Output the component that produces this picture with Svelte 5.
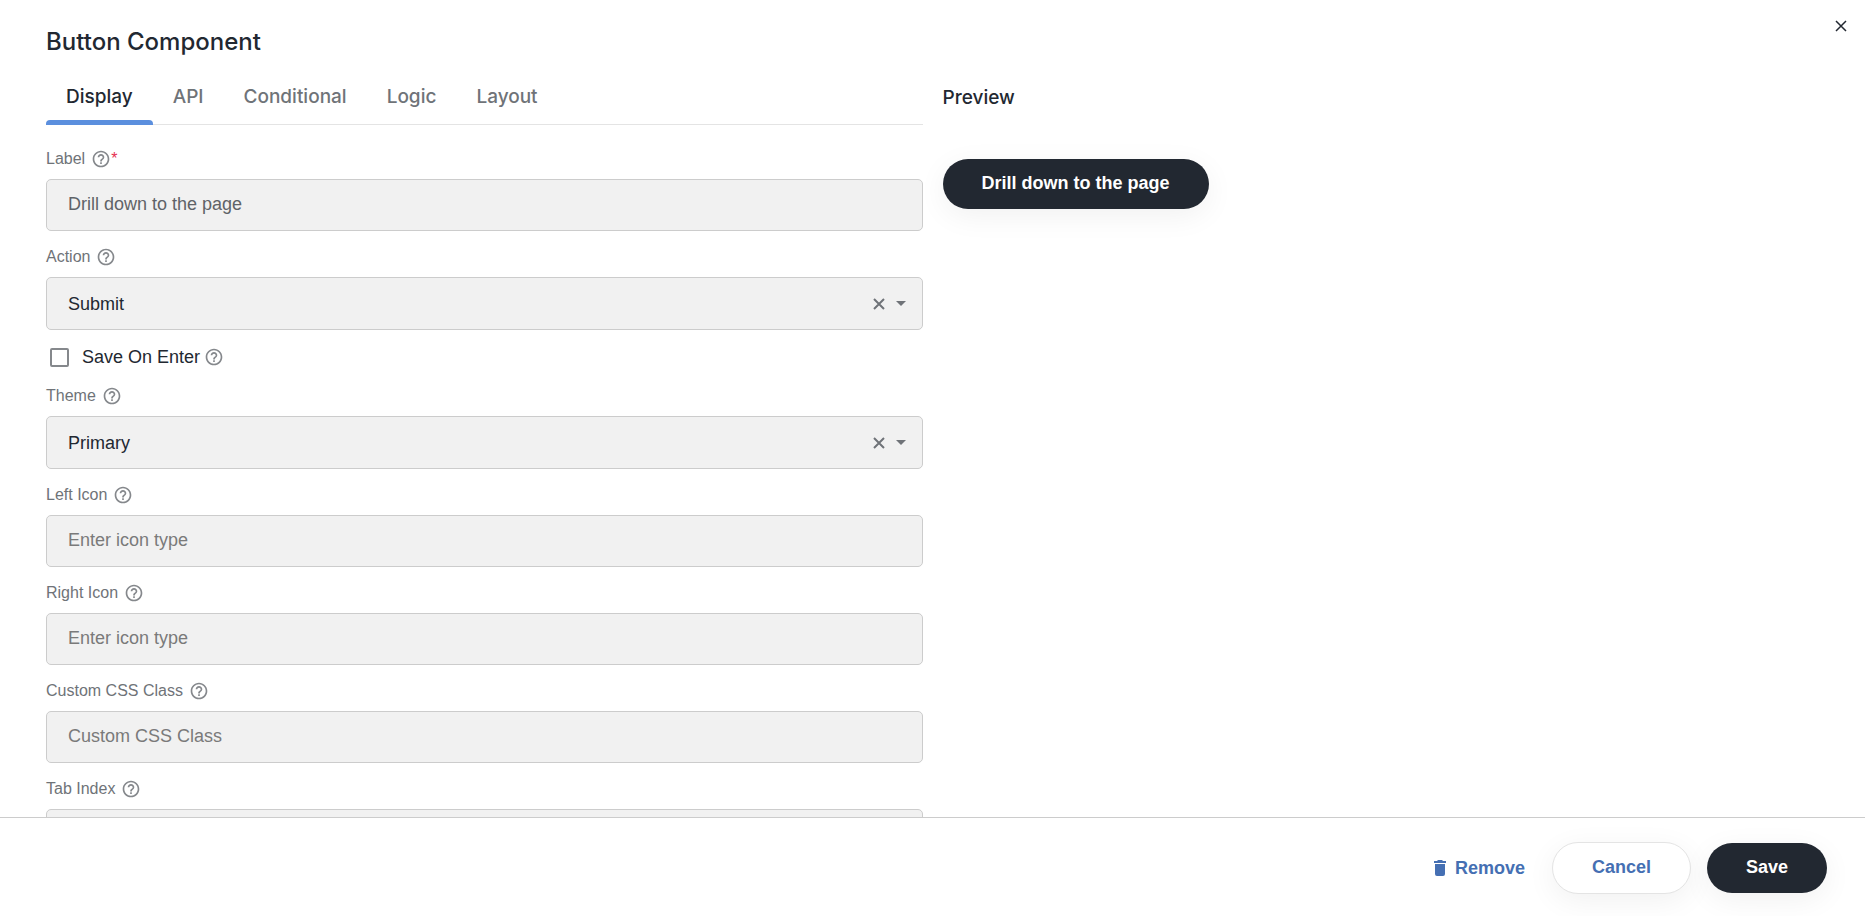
<script>
    const tabs = ["Display", "API", "Conditional", "Logic", "Layout"];
    let activeTab = "Display";

    let fields = [
        { id: "label", label: "Label", type: "text", value: "Drill down to the page", placeholder: "Field Label", required: true },
        { id: "action", label: "Action", type: "select", value: "Submit", options: ["Submit", "Save in state", "Event", "Custom", "Reset"] },
        { id: "saveOnEnter", label: "Save On Enter", type: "checkbox", value: false },
        { id: "theme", label: "Theme", type: "select", value: "Primary", options: ["Primary", "Secondary", "Info", "Success", "Danger", "Warning"] },
        { id: "leftIcon", label: "Left Icon", type: "text", value: "", placeholder: "Enter icon type" },
        { id: "rightIcon", label: "Right Icon", type: "text", value: "", placeholder: "Enter icon type" },
        { id: "customClass", label: "Custom CSS Class", type: "text", value: "", placeholder: "Custom CSS Class" },
        { id: "tabindex", label: "Tab Index", type: "text", value: "", placeholder: "0" },
    ];

    const clear = (field) => {
        field.value = "";
        fields = fields;
    };
</script>

{#snippet help()}
    <svg class="help" viewBox="0 0 24 24" aria-hidden="true">
        <path
            d="M11 18h2v-2h-2v2zm1-16C6.48 2 2 6.48 2 12s4.48 10 10 10 10-4.48 10-10S17.52 2 12 2zm0 18c-4.41 0-8-3.59-8-8s3.59-8 8-8 8 3.59 8 8-3.59 8-8 8zm0-14c-2.21 0-4 1.79-4 4h2c0-1.1.9-2 2-2s2 .9 2 2c0 2-3 1.75-3 5h2c0-2.25 3-2.5 3-5 0-2.21-1.79-4-4-4z"
        />
    </svg>
{/snippet}

<div class="dialog">
    <button class="close" aria-label="Close">
        <svg viewBox="0 0 12 12"><path d="M1 1l10 10M11 1L1 11" /></svg>
    </button>

    <div class="content">
        <h1>Button Component</h1>

        <div class="columns">
            <div class="settings">
                <nav class="tabs">
                    {#each tabs as tab}
                        <button
                            class="tab"
                            class:active={tab === activeTab}
                            on:click={() => (activeTab = tab)}
                        >
                            {tab}
                        </button>
                    {/each}
                </nav>

                <form>
                    {#each fields as field}
                        {#if field.type === "checkbox"}
                            <div class="check-row">
                                <input type="checkbox" id={field.id} bind:checked={field.value} />
                                <label for={field.id}>{field.label}</label>
                                {@render help()}
                            </div>
                        {:else}
                            <div class="field">
                                <div class="field-label">
                                    <label for={field.id}>{field.label}</label>
                                    {@render help()}
                                    {#if field.required}
                                        <span class="required">*</span>
                                    {/if}
                                </div>
                                {#if field.type === "select"}
                                    <div class="select-wrap">
                                        <select class="control" id={field.id} bind:value={field.value}>
                                            {#each field.options as option}
                                                <option value={option}>{option}</option>
                                            {/each}
                                        </select>
                                        <div class="select-icons">
                                            <button
                                                type="button"
                                                class="clear"
                                                aria-label="Clear {field.label}"
                                                on:click={() => clear(field)}
                                            >
                                                <svg viewBox="0 0 12 12"><path d="M1 1l10 10M11 1L1 11" /></svg>
                                            </button>
                                            <span class="caret"></span>
                                        </div>
                                    </div>
                                {:else}
                                    <input
                                        class="control"
                                        type="text"
                                        id={field.id}
                                        placeholder={field.placeholder}
                                        bind:value={field.value}
                                    />
                                {/if}
                            </div>
                        {/if}
                    {/each}
                </form>
            </div>

            <div class="preview">
                <h2>Preview</h2>
                <button class="btn primary">{fields[0].value}</button>
            </div>
        </div>
    </div>

    <footer>
        <button class="remove">
            <svg viewBox="0 0 12 16" aria-hidden="true">
                <path d="M1 4h10v10a2 2 0 0 1-2 2H3a2 2 0 0 1-2-2zM0 1h3l1-1h4l1 1h3v2H0z" />
            </svg>
            Remove
        </button>
        <button class="btn secondary">Cancel</button>
        <button class="btn primary">Save</button>
    </footer>
</div>

<style>
    :global(body) {
        background: #fff;
    }

    .dialog {
        position: relative;
        display: flex;
        flex-direction: column;
        height: 100vh;
        color: #222831;
        font-family: "Liberation Sans", Arial, sans-serif;
        font-size: 18px;
        line-height: 24px;
    }

    button,
    input,
    select {
        font: inherit;
        color: inherit;
        box-sizing: border-box;
    }

    button {
        border: none;
        background: none;
        padding: 0;
        cursor: pointer;
    }

    svg {
        display: block;
    }

    .close {
        position: absolute;
        top: 14px;
        right: 12px;
        padding: 6px;
    }

    .close svg,
    .clear svg {
        width: 12px;
        height: 12px;
        fill: none;
        stroke: #222831;
        stroke-width: 1.5;
    }

    .content {
        flex: 1;
        min-height: 0;
        overflow-y: auto;
        scrollbar-width: none;
        padding: 24px 46px 0;
    }

    h1,
    h2,
    .tab {
        margin: 0;
        font-family: Inter, sans-serif;
        font-weight: 500;
    }

    h1 {
        font-size: 24px;
        line-height: 36px;
    }

    .columns {
        display: grid;
        grid-template-columns: 1fr 1fr;
        gap: 20px;
        padding-top: 12px;
    }

    .tabs {
        display: flex;
        border-bottom: 1px solid #e4e4e4;
        margin-bottom: 22px;
    }

    .tab {
        position: relative;
        height: 52px;
        padding: 0 20px 2px;
        font-size: 19px;
        color: #6f7378;
    }

    .tab.active {
        color: #222831;
    }

    .tab.active::after {
        content: "";
        position: absolute;
        left: 0;
        right: 0;
        bottom: -1px;
        height: 5px;
        background: #5b8fde;
        border-radius: 4px 4px 0 0;
    }

    .field {
        margin-bottom: 14px;
    }

    .field-label {
        display: flex;
        align-items: center;
        height: 24px;
        margin-bottom: 8px;
        font-size: 16px;
        color: #6f7378;
    }

    .help {
        width: 20px;
        height: 20px;
        margin-left: 6px;
        fill: #85888c;
    }

    .required {
        color: #e5304f;
    }

    .control {
        display: block;
        width: 100%;
        height: 52px;
        padding: 0 21px 2px;
        border: 1px solid #ccc;
        border-radius: 5px;
        background: #f1f1f1;
        outline: none;
    }

    input.control {
        color: #5f6368;
    }

    .control::placeholder {
        color: #7a7a7a;
        opacity: 1;
    }

    .select-wrap {
        position: relative;
    }

    select.control {
        appearance: none;
        height: 53px;
        padding-bottom: 0;
    }

    .select-icons {
        position: absolute;
        top: 0;
        right: 17px;
        height: 100%;
        display: flex;
        align-items: center;
        gap: 11px;
        pointer-events: none;
    }

    .clear {
        pointer-events: auto;
    }

    .clear svg {
        stroke: #6f7378;
        stroke-width: 2;
    }

    .caret {
        border: 5px solid transparent;
        border-top-color: #6f7378;
        border-bottom: none;
    }

    .check-row {
        display: flex;
        align-items: center;
        height: 26px;
        margin-bottom: 14px;
        padding-left: 4px;
    }

    .check-row input {
        appearance: none;
        width: 19px;
        height: 19px;
        margin: 0 13px 0 0;
        border: 2px solid #85888c;
        border-radius: 2px;
    }

    .check-row input:checked {
        background: #5b8fde;
    }

    .check-row .help {
        margin-left: 4px;
    }

    h2 {
        padding-top: 14px;
        margin-bottom: 49px;
        font-size: 19px;
    }

    .btn {
        height: 50px;
        padding: 0 39px 2px;
        border-radius: 26px;
        font-weight: bold;
        box-shadow: 0 7px 30px rgba(0, 0, 0, 0.06);
    }

    .primary {
        background: #222831;
        color: #fff;
    }

    .secondary {
        height: 52px;
        border: 1px solid #e4e4e4;
        background: #fff;
        color: #456fb3;
    }

    footer {
        display: flex;
        align-items: center;
        justify-content: flex-end;
        gap: 16px;
        padding: 24px 38px 22px;
        border-top: 1px solid #ccc;
        background: #fff;
    }

    .remove {
        display: flex;
        align-items: center;
        gap: 9px;
        margin-right: 11px;
        font-weight: bold;
        color: #456fb3;
    }

    .remove svg {
        width: 12px;
        height: 16px;
        fill: #456fb3;
    }
</style>
